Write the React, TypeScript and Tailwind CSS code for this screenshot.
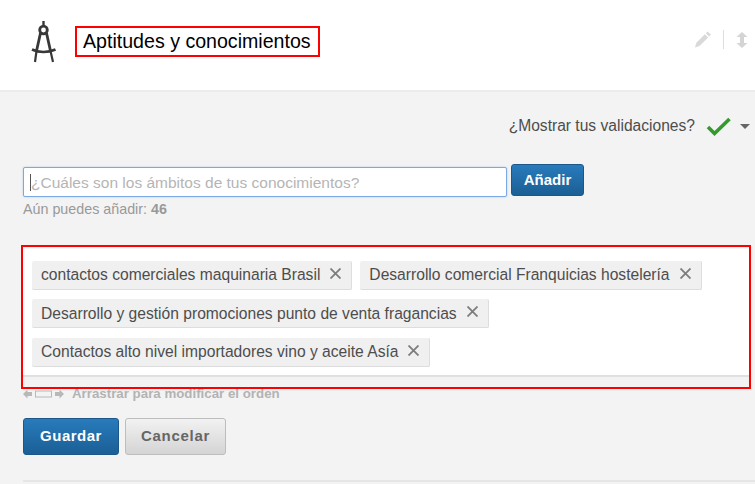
const skills = [
    'contactos comerciales maquinaria Brasil',
    'Desarrollo comercial Franquicias hostelería',
    'Desarrollo y gestión promociones punto de venta fragancias',
    'Contactos alto nivel importadores vino y aceite Asía',
];

const CompassIcon = () => (
    <svg width="26" height="44" viewBox="0 0 26 44" fill="none" stroke="#383838" className="shrink-0">
        <path d="M12.500 1v5" strokeWidth="2.400" />
        <circle cx="12.500" cy="10" r="3.800" strokeWidth="2.800" />
        <path d="M9.500 13 5.500 31M15.500 13 19.500 31" strokeWidth="2.800" />
        <path d="M1 29.500c4 2 7 2.500 11.500 2.500s7.500-.5 12-2.500" strokeWidth="2.600" />
        <path d="M5.500 31 4 42M19.500 31 22 42" strokeWidth="2.200" />
    </svg>
);

const App = () => {
    return (
        <div className="h-[484px] w-[755px] overflow-hidden bg-[#f3f3f3] font-['Liberation_Sans',Arial,sans-serif]">
            <div className="flex h-[92px] items-start border-b-2 border-[#ececec] bg-white">
                <div className="ml-[31px] mt-[20px]">
                    <CompassIcon />
                </div>
                <h2 className="ml-[18px] mt-[26px] flex h-[31px] w-[245px] items-center border-2 border-[#ff0000] pl-[6px] text-[19.6px] font-normal text-black">
                    Aptitudes y conocimientos
                </h2>
                <div className="ml-auto mr-[7px] mt-[30px] flex items-center">
                    <svg width="18" height="19" viewBox="0 0 18 18" fill="#d9d9d9">
                        <path d="M13.600 1l3.400 3.200-1.800 1.900-3.400-3.300zM10.800 3.800l3.400 3.300-8.700 8.500L1 17l1.300-4.700z" />
                    </svg>
                    <div className="ml-[11px] mr-[12px] h-[19px] w-px bg-[#dedede]" />
                    <svg width="12" height="16" viewBox="0 0 12 16" fill="#d4d4d4">
                        <path d="M6 0l5.500 5H8v6h3.500L6 16 .5 11H4V5H.5z" />
                    </svg>
                </div>
            </div>

            <div className="flex items-center justify-end pr-[5px] pt-[22px]">
                <span className="text-[15.6px] text-[#4d4d4d]">¿Mostrar tus validaciones?</span>
                <svg width="26" height="20" viewBox="0 0 26 20" className="ml-[11px]" fill="none" stroke="#359a2c" strokeWidth="3.600">
                    <path d="M2 11l6.500 6.500L23.500 3" />
                </svg>
                <div className="ml-[8px] mt-[1px] h-0 w-0 border-x-[5px] border-t-[5px] border-x-transparent border-t-[#666666]" />
            </div>

            <div className="ml-[23px] mt-[27px] flex items-start">
                <div className="mt-[3px] flex h-[30px] w-[484px] items-center rounded-[2px] border border-[#7aa9e6] bg-white pl-[6px] text-[15.5px] text-[#b5b5b5] shadow-[0_0_2px_#a9c8ec]">
                    <span className="h-[17px] w-px bg-[#555555]" />
                    ¿Cuáles son los ámbitos de tus conocimientos?
                </div>
                <button className="ml-[4px] flex h-[32px] w-[73px] items-center justify-center rounded-[3px] border border-[#1d5788] bg-gradient-to-b from-[#287bbc] to-[#1b5f95] text-[15px] font-bold text-white">
                    Añadir
                </button>
            </div>
            <p className="ml-[23px] mt-[2px] text-[14.3px] text-[#999999]">
                Aún puedes añadir: <b>46</b>
            </p>

            <div className="ml-[21px] mt-[24px] h-[144px] w-[730px] border-2 border-[#ff0000] pt-[1px]">
                <div className="flex h-[129px] flex-wrap content-start gap-x-[8px] gap-y-[9.5px] border-b-2 border-[#e0e0e0] bg-white pl-[9px] pt-[13px]">
                    {skills.map((skill) => (
                        <div
                            key={skill}
                            className="flex h-[29px] items-center rounded-[2px] border-b border-r border-[#dddddd] bg-[#f0f0f0] pl-[9px] pr-[10px] text-[15.62px] text-[#4d4d4d]"
                        >
                            {skill}
                            <svg width="11" height="11" viewBox="0 0 11 11" className="mb-[3px] ml-[10px]" stroke="#7d7d7d" strokeWidth="1.800">
                                <path d="M.5.5l10 10M10.500.5l-10 10" />
                            </svg>
                        </div>
                    ))}
                </div>
            </div>

            <div className="ml-[23px] flex h-[11px] items-center text-[13.3px] font-bold text-[#b3b3b3]">
                <svg width="41" height="10" viewBox="0 0 41 10" className="mr-[8px]">
                    <path d="M0 5l4.500-4.500V3H9v4H4.500v2.500z" fill="#b8b8b8" />
                    <rect x="12.500" y="2" width="16" height="6" fill="none" stroke="#b8b8b8" />
                    <path d="M41 5l-4.500-4.500V3H32v4h4.500v2.500z" fill="#b8b8b8" />
                </svg>
                Arrastrar para modificar el orden
            </div>

            <div className="ml-[23px] mt-[18px] flex gap-[6px]">
                <button className="h-[37px] w-[96px] rounded-[3px] border border-[#1d5788] bg-gradient-to-b from-[#287bbc] to-[#1b5f95] text-[15px] font-bold tracking-[0.5px] text-white">
                    Guardar
                </button>
                <button className="h-[37px] w-[101px] rounded-[3px] border border-[#bdbdbd] bg-gradient-to-b from-[#f2f2f2] to-[#d4d4d4] text-[15px] font-bold tracking-[0.7px] text-[#666666]">
                    Cancelar
                </button>
            </div>

            <div className="ml-[23px] mt-[25px] h-[2px] bg-[#e6e6e6]" />
        </div>
    );
};

export default App;
